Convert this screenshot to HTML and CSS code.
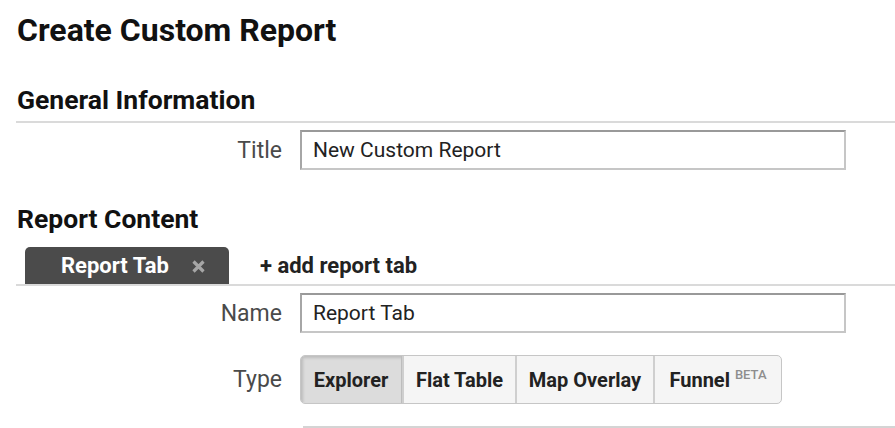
FILE: index.html
```html
<!DOCTYPE html>
<html>
<head>
<meta charset="utf-8">
<link rel="stylesheet" href="styles.css">
</head>
<body>
<div class="page">
  <h1 class="page-title">Create Custom Report</h1>
  <h2 class="section-title">General Information</h2>
  <div class="rule"></div>
  <div class="field-row title-row">
    <label class="field-label">Title</label>
    <div class="text-input">New Custom Report</div>
  </div>
  <h2 class="section-title content-title">Report Content</h2>
  <div class="tabs">
    <div class="tab active">
      <span class="tab-name">Report Tab</span>
      <svg class="tab-close" width="13" height="13" viewBox="0 0 13 13"><path d="M1.5 1.5 L11.5 11.5 M11.5 1.5 L1.5 11.5" stroke="#a6a6a6" stroke-width="3.2" stroke-linecap="butt" fill="none"/></svg>
    </div>
    <div class="add-tab">+ add report tab</div>
  </div>
  <div class="rule tab-rule"></div>
  <div class="field-row name-row">
    <label class="field-label">Name</label>
    <div class="text-input">Report Tab</div>
  </div>
  <div class="field-row type-row">
    <label class="field-label">Type</label>
    <div class="seg">
      <div class="seg-btn pressed btn-explorer">Explorer</div>
      <div class="seg-btn btn-flat">Flat Table</div>
      <div class="seg-btn btn-map">Map Overlay</div>
      <div class="seg-btn btn-funnel"><span>Funnel <sup class="beta">BETA</sup></span></div>
    </div>
  </div>
  <div class="bottom-rule"></div>
</div>
</body>
</html>
```
FILE: styles.css
```css
html, body {
  margin: 0;
  padding: 0;
  background: #fff;
}
body {
  font-family: Roboto, "Liberation Sans", Arial, sans-serif;
  color: #222;
  overflow: hidden;
}
.page {
  padding: 11px 0 0 16px;
  width: 879px;
}
.page-title {
  margin: 0 0 0 1px;
  font-size: 32px;
  font-weight: 700;
  line-height: 38px;
  color: #111;
}
.section-title {
  margin: 35px 0 0 1px;
  font-size: 26.5px;
  font-weight: 700;
  line-height: 32px;
  color: #111;
}
.content-title {
  margin-top: 33px;
}
.rule {
  height: 2px;
  background: #dadada;
  margin-top: 5px;
}
.field-row {
  display: flex;
  align-items: center;
}
.title-row {
  margin-top: 7px;
}
.field-label {
  width: 266px;
  text-align: right;
  font-size: 23px;
  color: #4a4a4a;
  padding-right: 18px;
}
.text-input {
  box-sizing: border-box;
  width: 546px;
  height: 40px;
  line-height: 36px;
  border: 2px solid #c6c6c6;
  border-top-color: #999;
  border-left-color: #a6a6a6;
  padding-left: 11px;
  font-size: 21px;
  color: #222;
}
.tabs {
  display: flex;
  align-items: flex-end;
  margin-top: 12px;
  padding-left: 9px;
}
.tab {
  box-sizing: border-box;
  width: 204px;
  height: 37px;
  background: #4b4b4b;
  border-radius: 5px 5px 0 0;
  display: flex;
  align-items: center;
  padding-left: 36px;
}
.tab-name {
  color: #fff;
  font-weight: 700;
  font-size: 22px;
}
.tab-close {
  margin-left: 23px;
  margin-top: 2px;
}
.add-tab {
  font-weight: 700;
  font-size: 22px;
  color: #222;
  margin-left: 31px;
  line-height: 37px;
}
.tab-rule {
  margin-top: 0;
}
.name-row {
  margin-top: 7px;
}
.type-row {
  margin-top: 22px;
}
.seg {
  display: flex;
  box-sizing: border-box;
  height: 49px;
  border: 1px solid #c6c6c6;
  border-radius: 5px;
  overflow: hidden;
  background: #f5f5f5;
}
.seg-btn {
  box-sizing: border-box;
  display: flex;
  align-items: center;
  justify-content: center;
  font-weight: 700;
  font-size: 20px;
  color: #222;
  border-left: 2px solid #cfcfcf;
}
.seg-btn:first-child {
  border-left: none;
}
.btn-explorer { width: 101px; }
.btn-flat { width: 113px; }
.btn-map { width: 138px; }
.btn-funnel { width: 128px; }
.seg-btn.pressed {
  background: #dcdcdc;
  box-shadow: inset 2px 2px 3px rgba(0,0,0,0.15);
  border-right: 1px solid #bdbdbd;
}
.beta {
  font-size: 13px;
  font-weight: 500;
  color: #8e8e8e;
  vertical-align: 8px;
  line-height: 0;
}
.bottom-rule {
  height: 2px;
  background: #d4d4d4;
  margin: 22px 0 0 287px;
}
```
